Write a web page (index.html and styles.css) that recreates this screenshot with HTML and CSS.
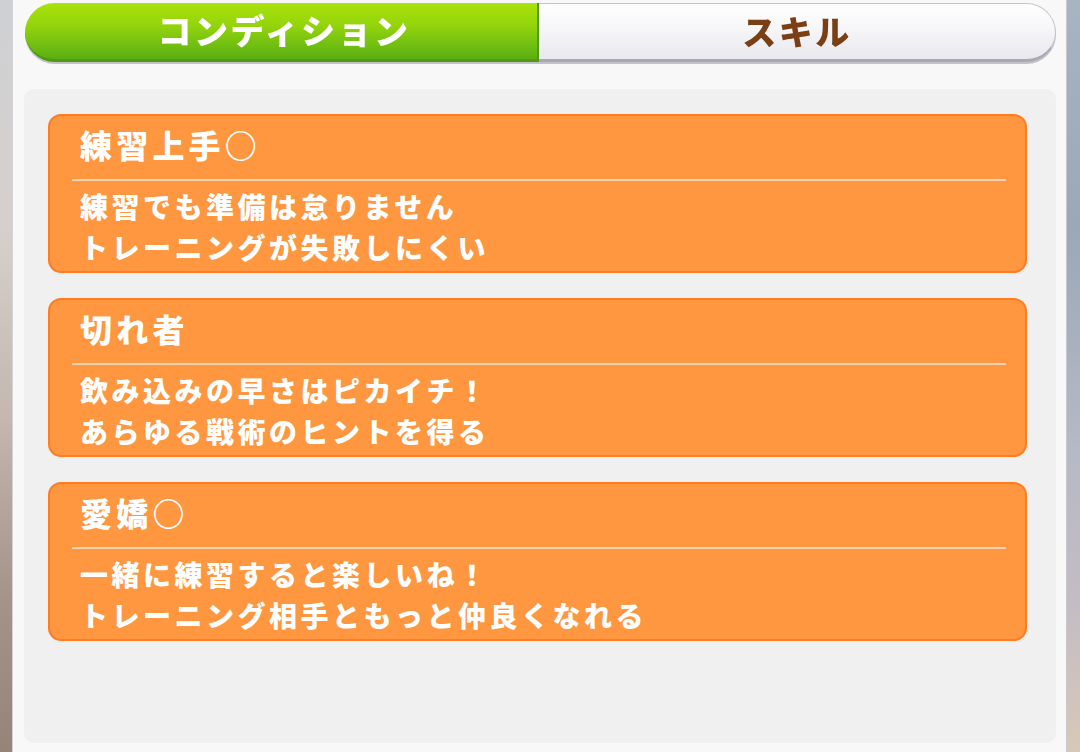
FILE: index.html
```html
<!DOCTYPE html>
<html lang="ja">
<head>
<meta charset="utf-8">
<title>コンディション</title>
<link rel="stylesheet" href="styles.css">
</head>
<body>
<div class="frame">
  <div class="bg-left"></div>
  <div class="panel">
    <div class="tabs">
      <div class="tab tab-active">コンディション</div>
      <div class="tab tab-idle">スキル</div>
    </div>
    <div class="list">
      <div class="card">
        <div class="card-title">練習上手○</div>
        <div class="card-rule"></div>
        <div class="card-desc">練習でも準備は怠りません<br>トレーニングが失敗しにくい</div>
      </div>
      <div class="card">
        <div class="card-title">切れ者</div>
        <div class="card-rule"></div>
        <div class="card-desc">飲み込みの早さはピカイチ！<br>あらゆる戦術のヒントを得る</div>
      </div>
      <div class="card">
        <div class="card-title">愛嬌○</div>
        <div class="card-rule"></div>
        <div class="card-desc">一緒に練習すると楽しいね！<br>トレーニング相手ともっと仲良くなれる</div>
      </div>
    </div>
  </div>
  <div class="bg-right"></div>
</div>
</body>
</html>
```

FILE: styles.css
```css
* { box-sizing: border-box; }
html, body {
  margin: 0;
  padding: 0;
  width: 1080px;
  height: 752px;
  overflow: hidden;
  font-family: "Noto Sans CJK JP", "Noto Sans", sans-serif;
}
.frame {
  display: flex;
  width: 1080px;
  height: 752px;
}
.bg-left {
  width: 12px;
  flex: none;
  background: linear-gradient(180deg, #cfd0d4 0%, #d6d0cc 30%, #c4b8b0 55%, #a39389 80%, #968479 100%);
}
.bg-right {
  width: 14px;
  flex: none;
  background: linear-gradient(180deg, #a7b4c2 0%, #9aa8b8 30%, #b6b9c6 60%, #c4bcc4 80%, #d8c8b8 100%);
  border-left: 1px solid #c8c8cc;
}
.panel {
  flex: 1;
  background: #f8f8f8;
  border-left: 1px solid #d4d4d8;
  padding: 3px 10px 0 11px;
  display: flex;
  flex-direction: column;
}
.tabs {
  display: flex;
  height: 60px;
  margin-left: 1px;
  filter: drop-shadow(0 2px 0 rgba(150, 150, 165, 0.55));
}
.tab {
  height: 59px;
  display: flex;
  align-items: center;
  justify-content: center;
  font-size: 34px;
  font-weight: 900;
  letter-spacing: 2.5px;
  line-height: 1;
  padding-bottom: 2px;
}
.tab-active {
  width: 514px;
  padding-left: 6px;
  border-radius: 30px 0 0 30px;
  background: linear-gradient(180deg, #aae20a 0%, #94d40c 40%, #6cbc12 80%, #5cae12 100%);
  border-bottom: 3px solid #4f9a10;
  border-right: 2px solid #4f9a10;
  color: #ffffff;
}
.tab-idle {
  flex: 1;
  border-radius: 0 30px 30px 0;
  background: linear-gradient(180deg, #ffffff 0%, #f6f6f8 45%, #e9e8ee 100%);
  border: 1px solid #c4c4cc;
  border-left: none;
  border-bottom: 3px solid #a9a9b4;
  color: #7a3f14;
}
.list {
  margin-top: 26px;
  width: 1032px;
  height: 654px;
  background: #f0f0f0;
  border-radius: 10px;
  padding: 25px 29px 0 24px;
  display: flex;
  flex-direction: column;
  gap: 25px;
}
.card {
  height: 159px;
  background: #ff9640;
  border: 2px solid #ff7c22;
  border-radius: 13px;
  padding: 6px 19px 0 22px;
  color: #ffffff;
  font-weight: 900;
}
.card-title {
  font-size: 32px;
  line-height: 44px;
  letter-spacing: 4.2px;
  padding-left: 8px;
}
.card-rule {
  height: 2px;
  margin-top: 13px;
  background: #f6d2b4;
}
.card-desc {
  margin-top: 5px;
  font-size: 28px;
  line-height: 41px;
  letter-spacing: 3.5px;
  padding-left: 8px;
}
```
